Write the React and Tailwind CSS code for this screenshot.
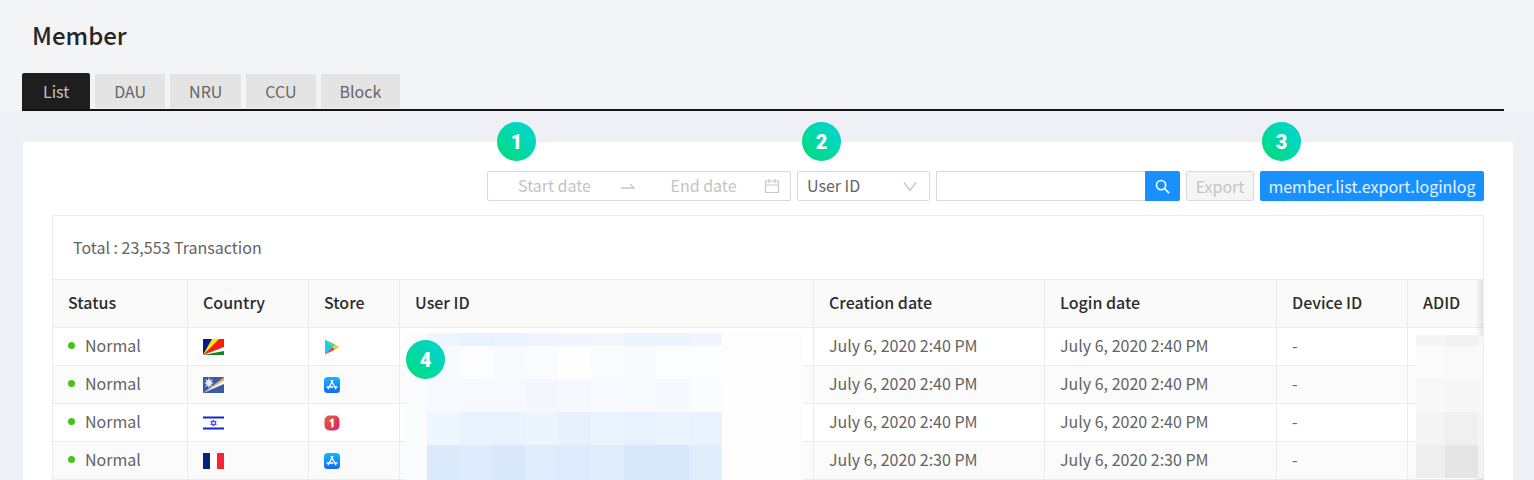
import React from "react";

const TABS = ["DAU", "NRU", "CCU", "Block"];

const ROWS = [
  { flag: "seychelles", store: "play", created: "July 6, 2020 2:40 PM", login: "July 6, 2020 2:40 PM" },
  { flag: "marshall", store: "apple", created: "July 6, 2020 2:40 PM", login: "July 6, 2020 2:40 PM" },
  { flag: "israel", store: "one", created: "July 6, 2020 2:40 PM", login: "July 6, 2020 2:40 PM" },
  { flag: "france", store: "apple", created: "July 6, 2020 2:30 PM", login: "July 6, 2020 2:30 PM" },
];

const USER_MASK = [
  "bg-[#edf5fe]", "bg-[#e6f2fd]", "bg-[#eaf3fe]", "bg-[#eef5fe]", "bg-[#f0f5fe]", "bg-[#f2f7fe]", "bg-[#ecf5fd]", "bg-[#ecf4fd]", "bg-[#eff6fd]",
  "bg-[#f6fafe]", "bg-[#fcfdfe]", "bg-[#f8fbfe]", "bg-[#fafcfe]", "bg-[#fefefe]", "bg-[#fafcfe]", "bg-[#f8fbfe]", "bg-[#fcfdfe]", "bg-[#fcfdfe]",
  "bg-[#f6fafe]", "bg-[#f6f9fe]", "bg-[#f6f9fe]", "bg-[#f4f7fd]", "bg-[#f5f8fd]", "bg-[#f7fafe]", "bg-[#f7fbfe]", "bg-[#f5f8fd]", "bg-[#fafcfe]",
  "bg-[#eef6fe]", "bg-[#e8f3fe]", "bg-[#e8f3fe]", "bg-[#ecf4fe]", "bg-[#e9f0fd]", "bg-[#eaf3fe]", "bg-[#e7f2fd]", "bg-[#ecf4fe]", "bg-[#eaf3fd]",
  "bg-[#daeafb]", "bg-[#deebfc]", "bg-[#d9e9fb]", "bg-[#dfecfb]", "bg-[#deebfc]", "bg-[#e0edfc]", "bg-[#d7e8fa]", "bg-[#d7e8fa]", "bg-[#e0eefc]",
];

const ADID_MASK = [
  "bg-[#f5f5f5]", "bg-[#f2f2f2]", "bg-[#f6f6f6]",
  "bg-[#fbfbfb]", "bg-[#f9f9f9]", "bg-[#fafafa]",
  "bg-[#f8f8f8]", "bg-[#f7f7f7]", "bg-[#f7f7f7]",
  "bg-[#f4f4f4]", "bg-[#f0f0f0]", "bg-[#f5f5f5]",
  "bg-[#eeeeee]", "bg-[#e5e5e5]", "bg-[#f2f2f2]",
];

function Badge({ n, className }) {
  return (
    <span
      className={`absolute z-10 flex size-[39px] items-center justify-center rounded-full bg-linear-to-tr from-[#00dc6e] via-[#00d8aa] to-[#00d4d8] font-['Roboto','Liberation_Sans',sans-serif] text-xl font-black text-white ${className}`}
    >
      {n}
    </span>
  );
}

function Flag({ name }) {
  return (
    <svg viewBox="0 0 21 16" className="h-4 w-[21px]" role="img" aria-label={name}>
      {name === "seychelles" && (
        <>
          <rect width="21" height="16" fill="#fff" />
          <path d="M0 16V0h10z" fill="#0a1a8c" />
          <path d="M0 16 9 0h8z" fill="#ffe600" />
          <path d="M0 16 16 0h5v8z" fill="#f5200a" />
          <path d="M0 16 21 12v4z" fill="#14851f" />
        </>
      )}
      {name === "marshall" && (
        <>
          <rect width="21" height="16" fill="#3b5aa6" />
          <path d="M0 16 21 0v3z" fill="#e8a550" />
          <path d="M0 16 21 3v4z" fill="#f4f4f6" />
          <path d="M6 0 7 3.6 10 2 8.200 5 11 6 8 7l1.500 3L6.700 8.500 6 12 5 8.500 2 10l1.700-3L1 6l2.700-1L2 2l3 1.600z" fill="#e6ebf7" />
        </>
      )}
      {name === "israel" && (
        <>
          <rect y="1" width="21" height="14" fill="#fff" />
          <path d="M0 1.500h21v2H0zM0 12.500h21v2H0z" fill="#1524d8" />
          <path d="m10.500 4.800 2.700 4.700H7.800zM10.500 11.200 7.800 6.500h5.400z" fill="none" stroke="#2734d8" strokeWidth=".8" />
        </>
      )}
      {name === "france" && (
        <>
          <rect width="21" height="16" fill="#fff" />
          <rect width="7" height="16" fill="#03247c" />
          <rect x="14" width="7" height="16" fill="#fa2333" />
        </>
      )}
    </svg>
  );
}

function Store({ name }) {
  return (
    <svg viewBox="0 0 16 16" className="size-4" role="img" aria-label={name}>
      {name === "play" && (
        <>
          <path d="M1 .5v15l7.500-7.500z" fill="#1fc8f0" />
          <path d="m1 .5 10 5L8.500 8z" fill="#2be08a" />
          <path d="m1 15.500 10-5L8.500 8z" fill="#ee3a50" />
          <path d="m11 5.500 4.500 2.500-4.500 2.500L8.500 8z" fill="#fcc419" />
        </>
      )}
      {name === "apple" && (
        <>
          <defs>
            <linearGradient id="store-blue" x1="0" y1="0" x2="0" y2="1">
              <stop offset="0" stopColor="#12b8fb" />
              <stop offset="1" stopColor="#1668f4" />
            </linearGradient>
          </defs>
          <rect width="16" height="16" rx="3.500" fill="url(#store-blue)" />
          <path d="m8.800 3.500-4.600 8.200M7.200 3.500l4.600 8.200M3 10h5.800M11 10h2" fill="none" stroke="#fff" strokeWidth="1.300" strokeLinecap="round" />
        </>
      )}
      {name === "one" && (
        <>
          <defs>
            <linearGradient id="store-red" x1="0" y1="0" x2="1" y2="1">
              <stop offset="0" stopColor="#e2603c" />
              <stop offset="1" stopColor="#d8206a" />
            </linearGradient>
          </defs>
          <rect x=".5" y=".5" width="15" height="15" rx="5" fill="url(#store-red)" />
          <path d="M5.500 5.600 8 3.600h1.600v8.600H7.300V6.300l-1.800.9z" fill="#fff" />
        </>
      )}
    </svg>
  );
}

function Th({ children }) {
  return (
    <th scope="col" className="h-12 border-r border-b border-[#ececec] px-[15px] pt-0 pb-[3px] text-left font-medium text-[#2c2c2c] last:border-r-0">
      {children}
    </th>
  );
}

function Td({ children, className = "" }) {
  return <td className={`h-[38px] border-r border-b border-[#ececec] px-[15px] last:border-r-0 ${className}`}>{children}</td>;
}

export default function App() {
  return (
    <div className="min-h-screen overflow-x-hidden bg-[#eff0f5] font-['Noto_Sans_CJK_KR','Noto_Sans_CJK_SC',sans-serif] text-base leading-6 text-[#636363]">
      <header className="bg-[#f3f4f6] pr-[30px] pl-[22px]">
        <h1 className="px-[10px] pt-[15px] pb-[18px] text-2xl leading-10 font-medium text-[#262626]">Member</h1>
        <nav className="flex items-end gap-[5px] border-b-2 border-[#141414]" aria-label="Member">
          <a href="#list" className="rounded-t-xs bg-[#1e1e1e] px-[21px] pt-[6px] pb-[6px] text-[#c4c4c4]" aria-current="page">
            List
          </a>
          {TABS.map((t) => (
            <a key={t} href={`#${t}`} className="mb-px bg-[#e4e4e4] px-[19px] pt-[5px] pb-[5px] text-[#666]">
              {t}
            </a>
          ))}
        </nav>
      </header>

      <main className="mt-[31px] mr-[21px] ml-[23px] bg-white px-[29px] pt-[29px]">
        <div className="flex h-[30px] justify-end gap-[6px]">
          <div className="relative flex w-[304px] items-center rounded-xs border border-[#d9d9d9] pr-[10px]">
            <Badge n="1" className="-top-[50px] left-[9px]" />
            <input aria-label="Start date" placeholder="Start date" className="w-[133px] pb-[2px] text-center outline-none placeholder:text-[#c4c4c4]" />
            <svg viewBox="0 0 14 6" className="h-[6px] w-[14px]" fill="none" stroke="#c8c8c8" strokeWidth="1.300">
              <path d="M0 5h13L9 1" />
            </svg>
            <input aria-label="End date" placeholder="End date" className="w-0 flex-1 pb-[2px] pl-2 text-center outline-none placeholder:text-[#c4c4c4]" />
            <svg viewBox="0 0 16 16" className="size-4" fill="none" stroke="#c8c8c8" strokeWidth="1.200">
              <path d="M1.500 3h13v11.500h-13zM1.500 7h13M5 1v4M11 1v4" />
            </svg>
          </div>
          <div className="relative flex w-[133px]">
            <Badge n="2" className="-top-[49px] left-[5px]" />
            <select aria-label="Search field" className="w-full appearance-none rounded-xs border border-[#d9d9d9] bg-white px-[9px] pb-[2px] leading-6 outline-none">
              <option>User ID</option>
            </select>
            <svg viewBox="0 0 14 10" className="pointer-events-none absolute top-[11px] right-[13px] h-[10px] w-[14px]" fill="none" stroke="#c4c4c4" strokeWidth="1.300">
              <path d="m1 .5 6 8 6-8" />
            </svg>
          </div>
          <form className="flex w-[244px]" role="search">
            <input aria-label="Search" className="w-0 flex-1 rounded-l-xs border border-r-0 border-[#d9d9d9] px-2 outline-none" />
            <button type="button" aria-label="Search" className="flex w-[35px] items-center justify-center rounded-r-xs bg-[#1890ff]">
              <svg viewBox="0 0 16 16" className="size-[15px]" fill="none" stroke="#fff" strokeWidth="1.700">
                <circle cx="6.500" cy="6.500" r="4.900" />
                <path d="m10 10 5 5" />
              </svg>
            </button>
          </form>
          <button type="button" disabled className="w-[68px] rounded-xs border border-[#d9d9d9] bg-[#f5f5f5] text-[#c4c4c4]">
            Export
          </button>
          <div className="relative flex">
            <Badge n="3" className="-top-[49px] left-[2px]" />
            <button type="button" className="w-[224px] rounded-xs bg-[#1890ff] text-[#e6f3ff]">
              member.list.export.loginlog
            </button>
          </div>
        </div>

        <section className="relative mt-[14px] overflow-hidden border border-b-0 border-[#ececec]">
          <p className="border-b border-[#ececec] px-5 pt-[19px] pb-5">Total : 23,553 Transaction</p>
          <table className="w-full table-fixed border-separate border-spacing-0">
            <colgroup>
              <col className="w-[135px]" />
              <col className="w-[121px]" />
              <col className="w-[91px]" />
              <col />
              <col className="w-[231px]" />
              <col className="w-[232px]" />
              <col className="w-[131px]" />
              <col className="w-[75px]" />
            </colgroup>
            <thead className="bg-[#fafafa]">
              <tr>
                <Th>Status</Th>
                <Th>Country</Th>
                <Th>Store</Th>
                <Th>User ID</Th>
                <Th>Creation date</Th>
                <Th>Login date</Th>
                <Th>Device ID</Th>
                <Th>ADID</Th>
              </tr>
            </thead>
            <tbody>
              {ROWS.map((r, i) => (
                <tr key={i} className="even:bg-[#fbfbfb]">
                  <Td className="pb-1">
                    <span className="flex items-center gap-[10px]">
                      <span className="mt-[2px] size-[7px] rounded-full bg-[#46c41a]" />
                      Normal
                    </span>
                  </Td>
                  <Td><Flag name={r.flag} /></Td>
                  <Td><Store name={r.store} /></Td>
                  <Td className="relative">
                    {i === 0 && (
                      <div className="absolute top-[5px] right-[10px] left-[6px] z-10 flex bg-[#fdfdfd]">
                        <Badge n="4" className="top-[7px] left-0" />
                        <div className="w-[21px] bg-[#fbfcfd]" />
                        <div className="grid w-[295px] grid-cols-9 grid-rows-[13px_33px_33px_33px_35px]">
                          {USER_MASK.map((c, k) => <span key={k} className={c} />)}
                        </div>
                      </div>
                    )}
                  </Td>
                  <Td className="pb-1">{r.created}</Td>
                  <Td className="pb-1">{r.login}</Td>
                  <Td className="pb-1">-</Td>
                  <Td className="relative">
                    {i === 0 && (
                      <div className="absolute top-[7px] right-0 left-2 z-10 grid grid-cols-[29px_33px_1fr] grid-rows-[11px_33px_33px_33px_33px]">
                        {ADID_MASK.map((c, k) => <span key={k} className={c} />)}
                      </div>
                    )}
                  </Td>
                </tr>
              ))}
            </tbody>
          </table>
          <div className="pointer-events-none absolute top-[64px] right-0 bottom-0 w-2 bg-linear-to-l from-black/10 to-transparent" />
        </section>
      </main>
    </div>
  );
}
